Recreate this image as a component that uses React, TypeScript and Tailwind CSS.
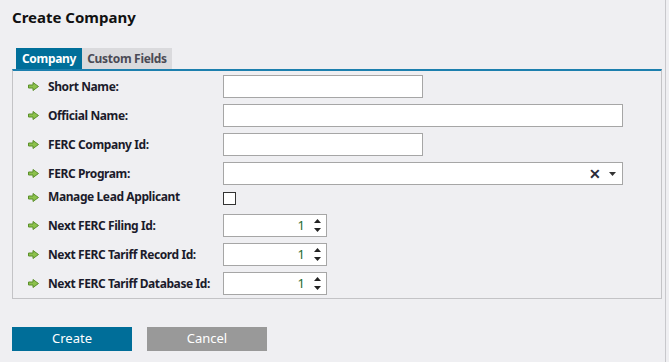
import { useState } from 'react';

const font = { fontFamily: '"Noto Sans", "Open Sans", sans-serif' };

function Arrow() {
    return (
        <svg width="11" height="9" viewBox="0 0 11 9" className="shrink-0">
            <path d="M0.5 3 H5 V0.5 L10.5 4.5 L5 8.5 V6 H0.5 Z" fill="#8cc14c" stroke="#5b8f2a" strokeWidth="1" />
        </svg>
    );
}

function Label({ text }: { text: string }) {
    return (
        <div className="flex items-center gap-[9px] pl-[15px]">
            <Arrow />
            <span className="text-[12px] font-bold text-[#1b1b2b] whitespace-nowrap tracking-[-0.4px]">{text}</span>
        </div>
    );
}

function NumberBox({ value }: { value: number }) {
    return (
        <div className="w-[104px] h-[23px] bg-white border border-[#a6a6a6] flex items-center justify-end">
            <span className="text-[13px] text-[#1e6b2e] pr-[9px]">{value}</span>
            <div className="flex flex-col items-center justify-center gap-[5px] pr-[5px]">
                <svg width="7" height="4" viewBox="0 0 7 4"><path d="M0 4 L3.5 0 L7 4 Z" fill="#222" /></svg>
                <svg width="7" height="4" viewBox="0 0 7 4"><path d="M0 0 L3.5 4 L7 0 Z" fill="#222" /></svg>
            </div>
        </div>
    );
}

export default function CreateCompany() {
    const [tab, setTab] = useState('company');
    const [lead, setLead] = useState(false);

    return (
        <div className="h-[362px] w-[669px] bg-[#efeff2] relative overflow-hidden" style={font}>
            <div className="absolute top-0 bottom-0 left-[665px] w-px bg-[#c8c8cc]" />
            <h1 className="text-[15px] font-bold text-[#111] pl-[12px] pt-[7px] leading-[20px]">Create Company</h1>

            <div className="flex pl-[16px] mt-[21px] h-[21px]">
                <button
                    onClick={() => setTab('company')}
                    className="h-[21px] w-[66px] bg-[#006f9a] text-white text-[12px] font-bold leading-[21px] tracking-[-0.3px]"
                >
                    Company
                </button>
                <button
                    onClick={() => setTab('custom')}
                    className="h-[21px] w-[90px] bg-[#dadadd] text-[#4a4a55] text-[12px] font-bold leading-[21px] tracking-[-0.3px]"
                >
                    Custom Fields
                </button>
            </div>

            <div className="ml-[12px] w-[650px] h-[230px] border-t-2 border-t-[#1c7fae] border-x border-b border-[#c3c3c6]">
                {tab === 'company' && (
                    <div className="grid grid-cols-[210px_1fr] items-center pt-[1px]">
                        <Label text="Short Name:" />
                        <input className="w-[200px] h-[23px] bg-white border border-[#a6a6a6] my-[3px]" />

                        <Label text="Official Name:" />
                        <input className="w-[400px] h-[23px] bg-white border border-[#a6a6a6] my-[3px]" />

                        <Label text="FERC Company Id:" />
                        <input className="w-[200px] h-[23px] bg-white border border-[#a6a6a6] my-[3px]" />

                        <Label text="FERC Program:" />
                        <div className="w-[400px] h-[23px] bg-white border border-[#a6a6a6] my-[3px] flex items-center justify-end gap-[8px] pr-[6px]">
                            <span className="text-[14px] font-bold text-[#2a2a3a] leading-none">✕</span>
                            <svg width="7" height="4" viewBox="0 0 7 4"><path d="M0 0 L3.5 4 L7 0 Z" fill="#333" /></svg>
                        </div>

                        <div className="self-start"><Label text="Manage Lead Applicant" /></div>
                        <div className="h-[23px] pt-[4px]">
                            <button
                                onClick={() => setLead(!lead)}
                                className="block w-[13px] h-[13px] bg-white border border-[#333]"
                            >
                                {lead ? <span className="block text-[10px] leading-[11px]">✓</span> : null}
                            </button>
                        </div>

                        <Label text="Next FERC Filing Id:" />
                        <div className="my-[3px]"><NumberBox value={1} /></div>

                        <Label text="Next FERC Tariff Record Id:" />
                        <div className="my-[3px]"><NumberBox value={1} /></div>

                        <Label text="Next FERC Tariff Database Id:" />
                        <div className="my-[3px]"><NumberBox value={1} /></div>
                    </div>
                )}
            </div>

            <div className="flex gap-[15px] pl-[12px] mt-[28px]">
                <button className="w-[120px] h-[24px] bg-[#006e99] text-white text-[13px]">Create</button>
                <button className="w-[120px] h-[24px] bg-[#999999] text-white text-[13px]">Cancel</button>
            </div>
        </div>
    );
}
